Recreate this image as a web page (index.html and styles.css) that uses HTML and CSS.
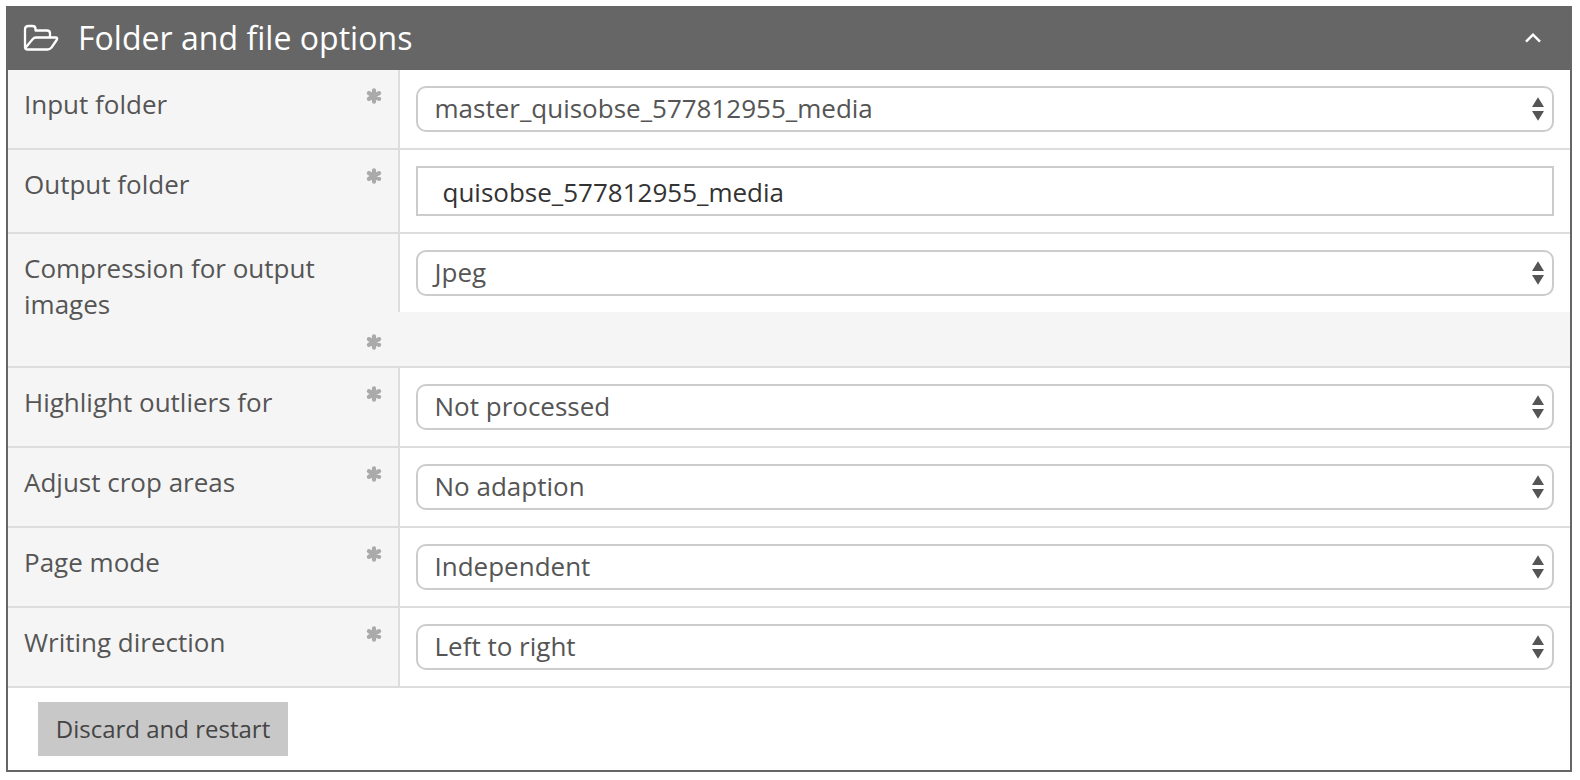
FILE: index.html
```html
<!DOCTYPE html>
<html lang="en">
<head>
<meta charset="utf-8">
<title>Folder and file options</title>
<link rel="stylesheet" href="styles.css">
</head>
<body>
<svg class="defs" width="0" height="0">
  <symbol id="star" viewBox="0 0 16 16">
    <path d="M8 2.300v11.400M2.900 5.100l10.200 5.800M13.100 5.100L2.900 10.900" fill="none" stroke="currentColor" stroke-width="4.200" stroke-linecap="round"/>
  </symbol>
  <symbol id="arrows" viewBox="0 0 12 24">
    <path d="M6 .3L12 10H0zM6 23.7L12 14H0z" fill="currentColor"/>
  </symbol>
</svg>
<section class="panel">
  <header class="panel-header">
    <svg class="folder" viewBox="0 0 36 28"><path d="M2 23V5.5Q2 2 5.500 2H9.500Q12.500 2 12.500 5V6.500H24Q27 6.500 27 9.500V13.500M2.300 24L9.800 15Q11 13.500 13 13.500H32.500Q35.200 13.500 33.700 16L28.500 23.500Q26.800 25.500 24.500 25.500H4Q2 25.500 2 23" fill="none" stroke="#fff" stroke-width="2.300" stroke-linejoin="round"/></svg>
    <h1 class="title">Folder and file options</h1>
    <svg class="chevron" viewBox="0 0 16 10"><path d="M1 8.700L8 1.700L15 8.700" fill="none" stroke="#fff" stroke-width="2.400"/></svg>
  </header>
  <div class="row">
    <div class="label"><span class="name">Input folder</span><svg class="star"><use href="#star"/></svg></div>
    <div class="field"><div class="select"><span class="value">master_quisobse_577812955_media</span><svg class="arrows"><use href="#arrows"/></svg></div></div>
  </div>
  <div class="row">
    <div class="label"><span class="name">Output folder</span><svg class="star"><use href="#star"/></svg></div>
    <div class="field"><div class="input"><span>quisobse_577812955_media</span></div></div>
  </div>
  <div class="row row-tall">
    <div class="label"><span class="name">Compression for output images</span><svg class="star"><use href="#star"/></svg></div>
    <div class="field"><div class="select"><span class="value">Jpeg</span><svg class="arrows"><use href="#arrows"/></svg></div></div>
  </div>
  <div class="row">
    <div class="label"><span class="name">Highlight outliers for</span><svg class="star"><use href="#star"/></svg></div>
    <div class="field"><div class="select"><span class="value">Not processed</span><svg class="arrows"><use href="#arrows"/></svg></div></div>
  </div>
  <div class="row">
    <div class="label"><span class="name">Adjust crop areas</span><svg class="star"><use href="#star"/></svg></div>
    <div class="field"><div class="select"><span class="value">No adaption</span><svg class="arrows"><use href="#arrows"/></svg></div></div>
  </div>
  <div class="row">
    <div class="label"><span class="name">Page mode</span><svg class="star"><use href="#star"/></svg></div>
    <div class="field"><div class="select"><span class="value">Independent</span><svg class="arrows"><use href="#arrows"/></svg></div></div>
  </div>
  <div class="row">
    <div class="label"><span class="name">Writing direction</span><svg class="star"><use href="#star"/></svg></div>
    <div class="field"><div class="select"><span class="value">Left to right</span><svg class="arrows"><use href="#arrows"/></svg></div></div>
  </div>
  <footer class="panel-footer"><button class="button">Discard and restart</button></footer>
</section>
</body>
</html>
```
FILE: styles.css
```css
* { box-sizing: border-box; }
body {
  margin: 0;
  padding: 6px 8px 8px 6px;
  background: #fff;
  color: #555;
  font: 26px/36px "Open Sans", "Noto Sans", sans-serif;
}
.defs { display: block; }
.panel { border: 2px solid #666; }
.panel-header {
  display: flex;
  align-items: center;
  height: 62px;
  padding: 0 29px 2px 15px;
  background: #666;
  color: #fff;
}
.folder { width: 36px; height: 28px; }
.title { flex: 1; margin: 0 0 0 19px; font-size: 32px; font-weight: 400; line-height: 60px; letter-spacing: 0.03px; }
.chevron { width: 16px; height: 10px; }
.row {
  display: flex;
  align-items: flex-start;
  background: #f5f5f5;
  border-bottom: 2px solid #ddd;
}
.label {
  display: flex;
  justify-content: space-between;
  width: 390px;
  padding: 16px 16px 0;
}
.name { width: 320px; }
.star { width: 16px; height: 16px; margin-top: 2px; color: #aaa; }
.field {
  flex: 1;
  padding: 16px;
  background: #fff;
  border-left: 2px solid #ddd;
}
.select {
  display: flex;
  align-items: center;
  justify-content: space-between;
  height: 46px;
  padding: 0 8px 0 16.5px;
  border: 2px solid #ccc;
  border-radius: 10px;
}
.value { padding-bottom: 2px; }
.arrows { width: 12px; height: 24px; color: #555; }
.input {
  height: 50px;
  padding: 6px 0 0 24.5px;
  border: 2px solid #ccc;
  color: #333;
}
.row-tall { height: 134px; }
.row-tall .star { margin-top: 84px; }
.panel-footer { height: 82px; padding: 14px 30px; }
.button {
  display: block;
  width: 250px;
  height: 54px;
  padding: 0;
  border: 0;
  background: #c8c8c8;
  color: #444;
  font: 24px/54px "Open Sans", "Noto Sans", sans-serif;
}
```
